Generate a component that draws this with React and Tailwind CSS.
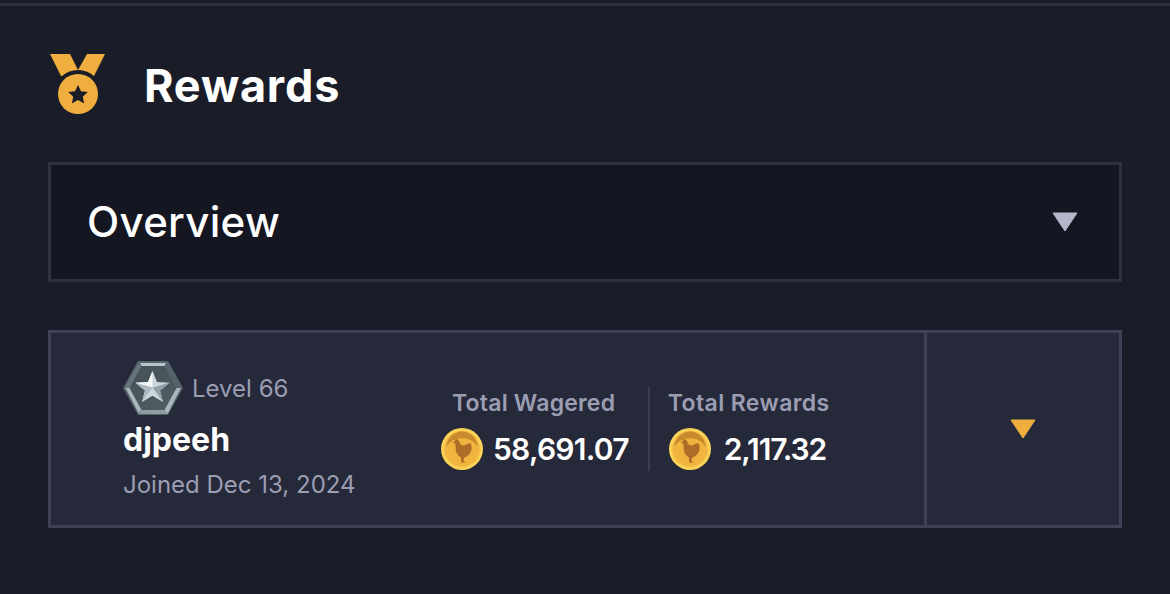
const font = { fontFamily: "Inter, 'Liberation Sans', sans-serif" };

function Medal() {
  return (
    <svg width="56" height="62" viewBox="0 0 56 62" className="block">
      <path d="M0 0H20L28 16L37 0H55L44 22H11Z" fill="#f0ae3f" />
      <circle cx="28" cy="40" r="24" fill="#1a1c28" />
      <circle cx="28" cy="40" r="20" fill="#f0ae3f" />
      <path d="M28 31L31 37.3L37.8 38.1L32.8 42.8L34.1 49.5L28 46.1L21.9 49.5L23.2 42.8L18.2 38.1L25 37.3Z" fill="#1a1c28" />
    </svg>
  );
}

function RankBadge() {
  return (
    <svg width="60" height="54" viewBox="0 0 60 54" className="block">
      <defs>
        <linearGradient id="hexInner" x1="0" y1="0" x2="1" y2="1">
          <stop offset="0" stopColor="#444f56" />
          <stop offset="1" stopColor="#525e65" />
        </linearGradient>
      </defs>
      <path d="M15 0H45L60 27L45 54H15L0 27Z" fill="#56636b" />
      <path d="M18.5 5H41.5L53.5 27L41.5 49H18.5L6.5 27Z" fill="url(#hexInner)" />
      <path d="M17 2H43L41.5 5H18.5Z" fill="#b9c5ca" />
      <path d="M2 27L15 3L18 5.5L6.5 27Z" fill="#66747b" />
      <path d="M2.5 27L6.5 27L18.5 49L15.5 52Z" fill="#aab6bb" />
      <path d="M15.5 53L18.5 49H41.5L44.5 53Z" fill="#8f9da3" />
      <path d="M44.5 53L41.5 49L53.5 27H58Z" fill="#a9b6bb" />
      <path d="M29.5 10L34 21L46.5 21.8L37 29.5L40 41L29.5 34.8L19 41L22 29.5L12.5 21.8L25 21Z" fill="#cbd7dc" />
      <path d="M29.5 10L29.5 26.5L12.5 21.8L25 21Z" fill="#f4f7f8" />
      <path d="M29.5 26.5L46.5 21.8L37 29.5L40 41Z" fill="#92a1a9" />
      <path d="M29.5 26.5L19 41L22 29.5L12.5 21.8Z" fill="#adbbc1" />
    </svg>
  );
}

function Coin({ id }) {
  return (
    <svg width="42" height="42" viewBox="0 0 42 42" className="block shrink-0">
      <defs>
        <radialGradient id={id} cx="0.5" cy="0.5" r="0.5">
          <stop offset="0" stopColor="#eeb03c" />
          <stop offset="0.8" stopColor="#f2b53f" />
          <stop offset="0.92" stopColor="#fcd75c" />
          <stop offset="1" stopColor="#f9cf52" />
        </radialGradient>
      </defs>
      <circle cx="21" cy="21" r="21" fill={`url(#${id})`} />
      <path d="M5.5 19A15.5 15.5 0 0 1 36.5 19A16.5 13.5 0 0 0 5.5 19Z" fill="#c88a2c" />
      <path
        d="M12 14.5L14 13L14.5 11L16.5 11.5C18 12.5 18.5 14 19 15.5C20 17.5 22 18 24 17C26 16 27.5 14.5 29.5 15.5C30.5 17 31 19 30.5 21.5C30 24.5 28 27 25.5 28.5C24.5 29 23.5 29.5 23 30L22.5 33L24.5 34.5L20 34.5L20 29.5C17 28 15 25 14.8 22C14.6 19.5 15 17 14 15.5Z"
        fill="#ad6c27"
      />
    </svg>
  );
}

function Stat({ label, value, coinId, gap, labelClass, rowClass, valueClass }) {
  return (
    <div className="flex flex-col">
      <div className={`text-[23px] leading-[28px] font-semibold text-[#9b9eb3] ${labelClass}`}>{label}</div>
      <div className={`mt-[11px] flex items-center ${gap} ${rowClass}`}>
        <Coin id={coinId} />
        <span className={`text-[30px] leading-[42px] font-semibold text-white ${valueClass}`}>{value}</span>
      </div>
    </div>
  );
}

export default function App() {
  return (
    <div style={font} className="h-[594px] w-full overflow-hidden bg-[#1a1c28]">
      <div className="mt-[3px] h-[3px] bg-[#2b2e3f]" />

      <div className="px-[48px]">
        {/* Titre */}
        <div className="mt-[48px] flex h-[62px] items-center pl-[2px]">
          <Medal />
          <h1 className="ml-[38px] text-[45px] font-bold leading-none tracking-[0.85px] text-white">Rewards</h1>
        </div>

        {/* Overview */}
        <div className="mt-[46px] flex h-[120px] items-center justify-between border-[3px] border-[#2e3140] bg-[#141621] pl-[36px] pr-[41px]">
          <span className="text-[42px] font-medium leading-none tracking-[0.3px] text-white">Overview</span>
          <svg width="26" height="20" viewBox="0 0 26 20" className="block">
            <path d="M1 1H25L13 19Z" fill="#b4b6c9" stroke="#b4b6c9" strokeWidth="1" strokeLinejoin="round" />
          </svg>
        </div>

        {/* Carte joueur */}
        <div className="mt-[48px] flex h-[198px] border-[3px] border-[#3f4254] bg-[#262939]">
          <div className="flex flex-1 items-center border-r-[3px] border-[#3f4254]">
            <div className="ml-[72px] mt-[3px] w-[318px] shrink-0">
              <div className="flex items-center">
                <RankBadge />
                <span className="ml-[9px] mt-[2px] text-[24px] leading-none text-[#9b9eb3]">Level 66</span>
              </div>
              <div className="mt-[7px] text-[32px] font-bold leading-[36px] text-white">djpeeh</div>
              <div className="mt-[12px] text-[24px] leading-[30px] text-[#9b9eb3]">Joined Dec 13, 2024</div>
            </div>
            <Stat
              label="Total Wagered"
              value="58,691.07"
              coinId="coinA"
              gap="gap-[10px]"
              labelClass="pl-[11px] tracking-[0.2px]"
              rowClass=""
              valueClass="tracking-[-0.75px]"
            />
            <div className="ml-[19px] mr-[18px] h-[84px] w-[2px] bg-[#3b3e50]" />
            <Stat
              label="Total Rewards"
              value="2,117.32"
              coinId="coinB"
              gap="gap-[13px]"
              labelClass="tracking-[0.4px]"
              rowClass="pl-[1px]"
              valueClass="tracking-[-1.1px]"
            />
          </div>
          <div className="flex w-[192px] shrink-0 items-center justify-center">
            <svg width="26" height="20" viewBox="0 0 26 20" className="block">
              <path d="M1 1H25L13 19Z" fill="#f0ae3f" stroke="#f0ae3f" strokeWidth="1" strokeLinejoin="round" />
            </svg>
          </div>
        </div>
      </div>
    </div>
  );
}
